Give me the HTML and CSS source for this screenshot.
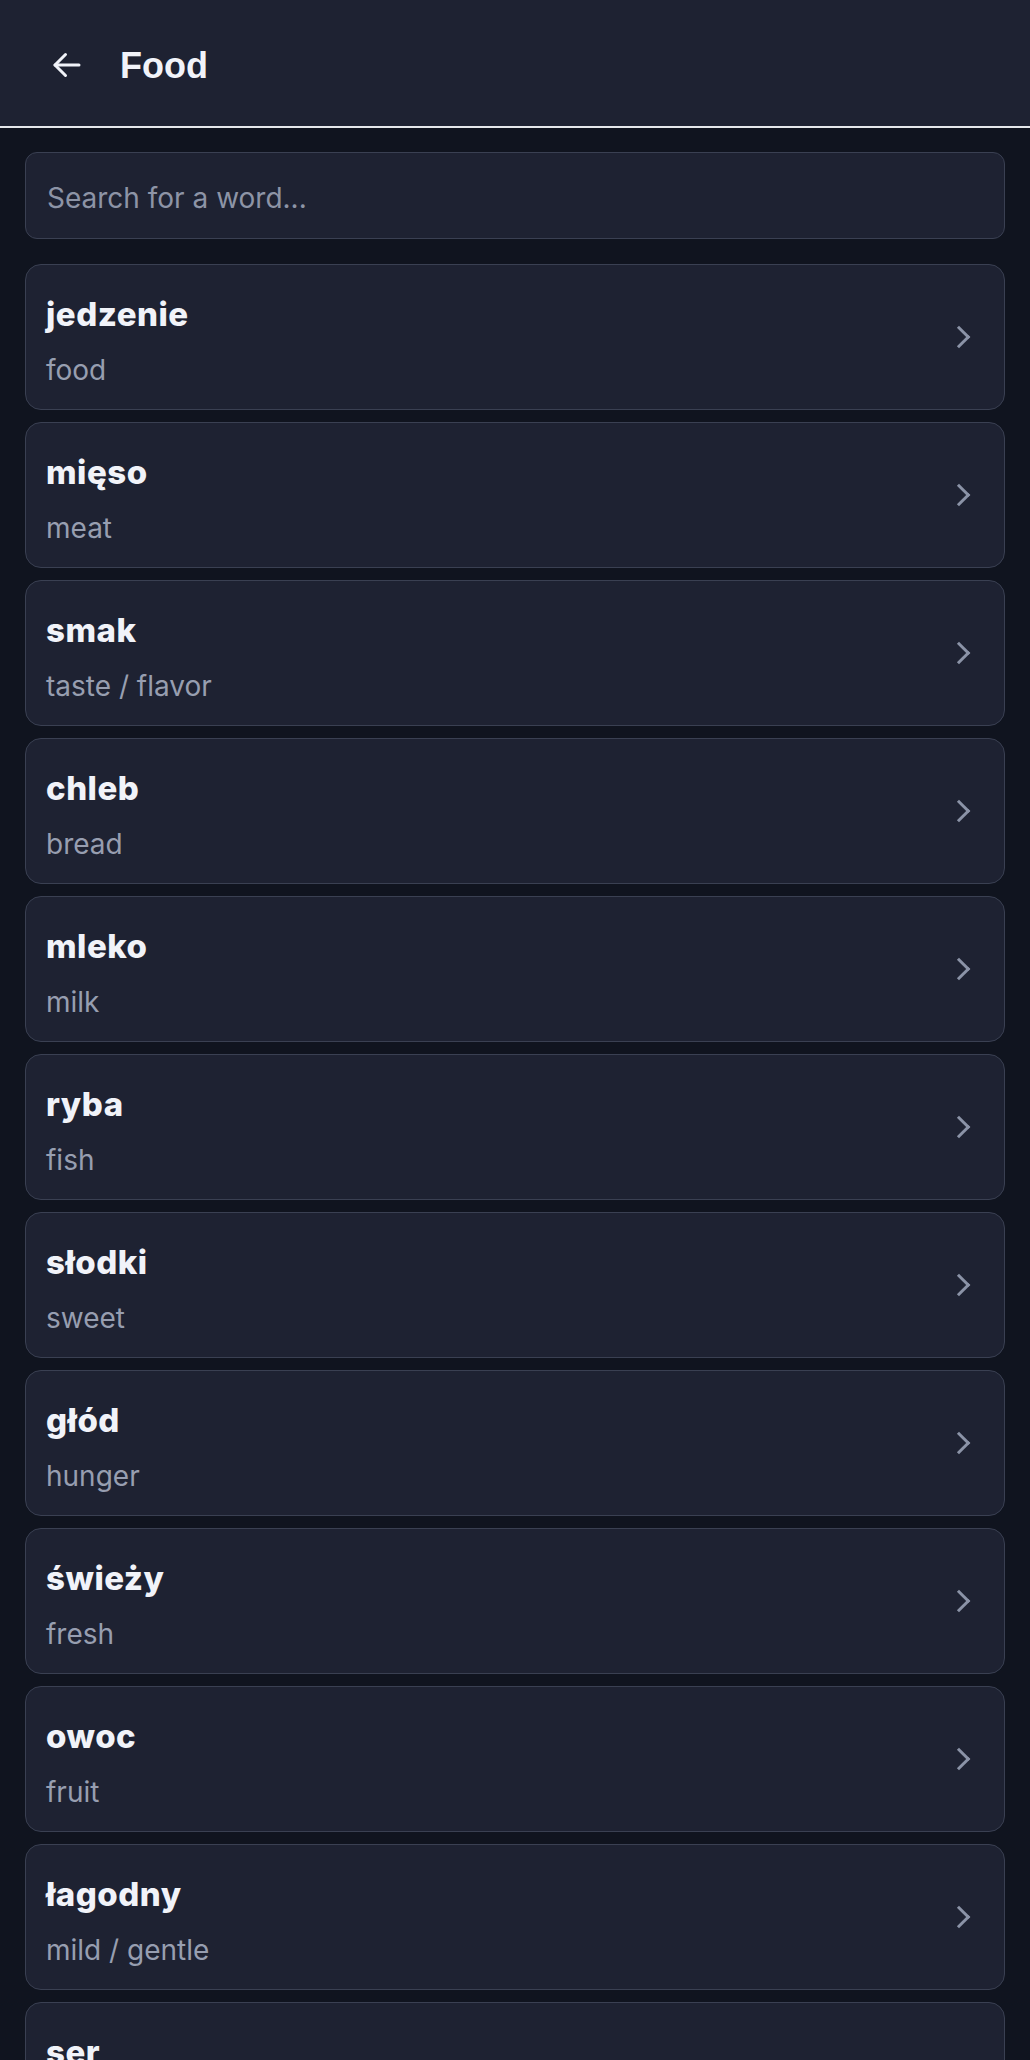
FILE: index.html
```html
<!DOCTYPE html>
<html>
<head>
    <meta charset="UTF-8">
    <title>Food</title>
    <link rel="stylesheet" href="styles.css">
</head>
<body>
    <header class="topbar">
        <button class="back" aria-label="Back">
            <svg width="36" height="36" viewBox="0 0 24 24" fill="none" stroke="currentColor" stroke-width="2" stroke-linecap="round" stroke-linejoin="round">
                <path d="M20 12H4"/>
                <path d="M11 5l-7 7 7 7"/>
            </svg>
        </button>
        <h1>Food</h1>
    </header>
    <main class="content">
        <input class="search" type="text" placeholder="Search for a word...">
        <ul class="words">
            <li class="word"><div class="text"><div class="pl">jedzenie</div><div class="en">food</div></div><span class="chev"></span></li>
            <li class="word"><div class="text"><div class="pl">mięso</div><div class="en">meat</div></div><span class="chev"></span></li>
            <li class="word"><div class="text"><div class="pl">smak</div><div class="en">taste / flavor</div></div><span class="chev"></span></li>
            <li class="word"><div class="text"><div class="pl">chleb</div><div class="en">bread</div></div><span class="chev"></span></li>
            <li class="word"><div class="text"><div class="pl">mleko</div><div class="en">milk</div></div><span class="chev"></span></li>
            <li class="word"><div class="text"><div class="pl">ryba</div><div class="en">fish</div></div><span class="chev"></span></li>
            <li class="word"><div class="text"><div class="pl">słodki</div><div class="en">sweet</div></div><span class="chev"></span></li>
            <li class="word"><div class="text"><div class="pl">głód</div><div class="en">hunger</div></div><span class="chev"></span></li>
            <li class="word"><div class="text"><div class="pl">świeży</div><div class="en">fresh</div></div><span class="chev"></span></li>
            <li class="word"><div class="text"><div class="pl">owoc</div><div class="en">fruit</div></div><span class="chev"></span></li>
            <li class="word"><div class="text"><div class="pl">łagodny</div><div class="en">mild / gentle</div></div><span class="chev"></span></li>
            <li class="word"><div class="text"><div class="pl">ser</div><div class="en">cheese</div></div><span class="chev"></span></li>
            <li class="word"><div class="text"><div class="pl">woda</div><div class="en">water</div></div><span class="chev"></span></li>
        </ul>
    </main>
</body>
</html>
```

FILE: styles.css
```css
body {
    margin: 0;
    background-color: #10141f;
    font-family: Inter, "Noto Sans", sans-serif;
    color: #f1f3f9;
}
.topbar {
    display: flex;
    align-items: center;
    height: 128px;
    box-sizing: border-box;
    padding: 5px 0 0 49px;
    background-color: #1e2232;
    border-bottom: 2px solid #e5e7eb;
}
.back {
    display: flex;
    padding: 0;
    margin: 0 35px 2px 0;
    background: none;
    border: none;
    color: #f1f3f9;
}
.topbar h1 {
    margin: 0;
    font-family: "Liberation Sans", Arial, sans-serif;
    font-size: 36px;
    font-weight: 700;
}
.content {
    padding: 24px 25px;
}
.search {
    display: block;
    width: 100%;
    box-sizing: border-box;
    height: 87px;
    padding: 5px 21px 0;
    margin-bottom: 25px;
    background-color: #1e2232;
    border: 1.5px solid #3a4052;
    border-radius: 12px;
    font-family: Inter, sans-serif;
    font-size: 28px;
    color: #f1f3f9;
    outline: none;
}
.search::placeholder {
    color: #8d94a6;
}
.words {
    list-style: none;
    margin: 0;
    padding: 0;
    display: flex;
    flex-direction: column;
    gap: 12px;
}
.word {
    display: flex;
    align-items: center;
    height: 146px;
    box-sizing: border-box;
    padding: 8px 37px 0 20px;
    background-color: #1e2232;
    border: 1.5px solid #3a4052;
    border-radius: 16px;
}
.text {
    flex: 1;
}
.pl {
    font-size: 33px;
    font-weight: 800;
    line-height: 40px;
    letter-spacing: 0.5px;
    margin-bottom: 18px;
}
.en {
    font-size: 28px;
    line-height: 36px;
    color: #979eb0;
}
.chev {
    width: 13px;
    height: 13px;
    border-top: 3px solid #8b93a7;
    border-right: 3px solid #8b93a7;
    transform: rotate(45deg);
    margin-top: -8px;
}
```
